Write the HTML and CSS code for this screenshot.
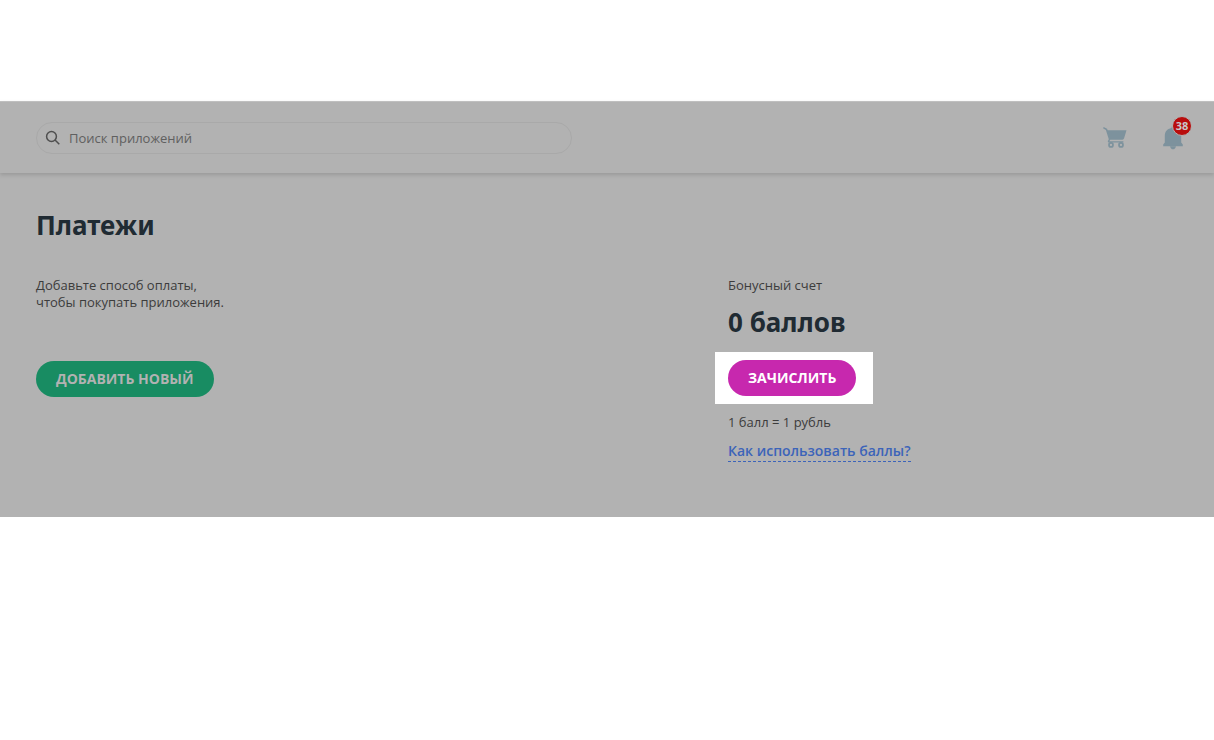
FILE: index.html
```
<!DOCTYPE html>
<html lang="ru">
<head>
<meta charset="utf-8">
<title>Платежи</title>
<link rel="stylesheet" href="styles.css">
</head>
<body>
<div class="page">
    <header class="header">
        <div class="search">
            <label class="search-label" for="search">
                <svg width="16" height="16" viewBox="0 0 16 16" fill="none" stroke="#4f4f4f" stroke-width="1.5" aria-label="Поиск">
                    <circle cx="6.5" cy="6.5" r="4.9"/>
                    <path d="M10 10L14.3 14.3"/>
                </svg>
            </label>
            <input class="search-input" id="search" type="text" placeholder="Поиск приложений">
        </div>
        <div class="header-icons">
            <button class="icon-btn" aria-label="Корзина">
                <svg width="24" height="22" viewBox="0 0 24 22" fill="#7d929d">
                    <path d="M0 1.2L.7 0 4 1.8 4.7 3.3H23.5L21 11.6Q20.6 12.7 19.5 12.7H7.2L6.3 14.2H20.4V15.6H5.6Q4.4 15.3 4.9 14.1L5.8 12.3 2.9 2.9Z"/>
                    <circle cx="8" cy="17.9" r="2" fill="none" stroke="#7d929d" stroke-width="1.7"/>
                    <circle cx="18" cy="17.9" r="2" fill="none" stroke="#7d929d" stroke-width="1.7"/>
                </svg>
            </button>
            <button class="icon-btn" aria-label="Уведомления">
                <svg width="20" height="24" viewBox="0 0 20 24" fill="#7d929d">
                    <path d="M10 0C11 0 11.5.8 11.5 2 16 2.8 18.2 5.8 18.2 10V16.5L19.8 18.4V20.2H.2V18.4L1.8 16.5V10C1.8 5.8 4 2.8 8.5 2 8.5.8 9 0 10 0Z"/>
                    <path d="M7 20.2H13Q12.3 23.3 10 23.3T7 20.2Z"/>
                </svg>
                <span class="badge">38</span>
            </button>
        </div>
    </header>

    <main class="content">
        <h1 class="title">Платежи</h1>
        <div class="columns">
            <div class="payment">
                <p class="text">Добавьте способ оплаты,<br>чтобы покупать приложения.</p>
                <button class="btn btn-add">Добавить новый</button>
            </div>
            <div class="bonus">
                <p class="text">Бонусный счет</p>
                <p class="title points">0 баллов</p>
                <div class="highlight">
                    <button class="btn btn-credit">Зачислить</button>
                </div>
                <p class="text">1 балл = 1 рубль</p>
                <a class="help-link" href="#">Как использовать баллы?</a>
            </div>
        </div>
    </main>
</div>
</body>
</html>
```
FILE: styles.css
```
* {
    box-sizing: border-box;
}

body {
    margin: 0;
    background-color: #fff;
    font-family: "Open Sans", "Noto Sans", sans-serif;
    font-size: 13px;
    color: #3c3c3c;
}

.page {
    margin-top: 101px;
    padding-bottom: 55px;
    background-color: #b2b2b2;
}

.header {
    display: flex;
    justify-content: space-between;
    align-items: center;
    height: 72px;
    padding: 0 31px 0 36px;
    border-top: 1px solid #bfbfbf;
    box-shadow: 0 2px 4px rgba(0, 0, 0, 0.14);
}

.search {
    display: flex;
    align-items: center;
    width: 47%;
    max-width: 536px;
    height: 32px;
    padding: 0 8px;
    border: 1px solid #a9a9a9;
    border-radius: 16px;
}

.search-label {
    display: flex;
}

.search-input {
    flex: 1;
    margin-left: 8px;
    padding: 0;
    border: none;
    outline: none;
    background: none;
    font: inherit;
    color: #3c3c3c;
}

.search-input::placeholder {
    color: #606060;
    opacity: 1;
}

.header-icons {
    display: flex;
    align-items: center;
    gap: 36px;
}

.icon-btn {
    position: relative;
    display: flex;
    padding: 0;
    border: none;
    background: none;
}

.badge {
    position: absolute;
    top: -10px;
    left: 9px;
    width: 20px;
    height: 20px;
    border: 1px solid #b2b2b2;
    border-radius: 50%;
    background-color: #b90d0d;
    font-family: "Open Sans", "Noto Sans", sans-serif;
    font-size: 11px;
    font-weight: 700;
    line-height: 18px;
    text-align: center;
    color: #c8c8c8;
}

.content {
    padding: 34px 0 0 36px;
}

.title {
    margin: 0;
    font-family: "Noto Sans", "Open Sans", sans-serif;
    font-size: 26px;
    font-weight: 700;
    line-height: 36px;
    color: #202b33;
}

.columns {
    display: grid;
    grid-template-columns: 692fr 486fr;
    margin-top: 34px;
}

.text {
    margin: 0;
    line-height: 17px;
}

.btn {
    height: 36px;
    padding: 0 20px;
    border: none;
    border-radius: 18px;
    font-family: "Open Sans", "Noto Sans", sans-serif;
    font-size: 14px;
    font-weight: 700;
    line-height: 18px;
    text-transform: uppercase;
}

.btn-add {
    margin-top: 50px;
    background-color: #188c62;
    color: #b2b2b2;
}

.btn-credit {
    background-color: #c728ae;
    color: #fff;
}

.points {
    margin-top: 10px;
}

.highlight {
    width: fit-content;
    margin: 12px 0 10px -13px;
    padding: 8px 17px 8px 13px;
    background-color: #fff;
}

.highlight .btn {
    display: block;
}

.help-link {
    display: inline-block;
    margin-top: 9px;
    border-bottom: 1px dashed #3c64b9;
    font-size: 14px;
    font-weight: 600;
    line-height: 21px;
    text-decoration: none;
    color: #3c64b9;
}
```
